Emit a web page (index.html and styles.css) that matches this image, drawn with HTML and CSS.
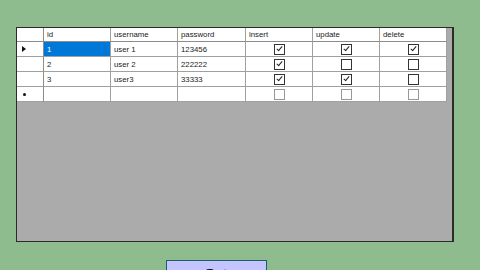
FILE: index.html
```html
<!DOCTYPE html>
<html lang="en">
<head>
    <meta charset="UTF-8">
    <title>Users</title>
    <link rel="stylesheet" href="styles.css">
</head>
<body>
    <div class="grid">
        <div class="row header">
            <div class="cell rowhead"></div>
            <div class="cell">id</div>
            <div class="cell">username</div>
            <div class="cell">password</div>
            <div class="cell">insert</div>
            <div class="cell">update</div>
            <div class="cell">delete</div>
        </div>
        <div class="row">
            <div class="cell rowhead"><span class="arrow"></span></div>
            <div class="cell selected">1</div>
            <div class="cell">user 1</div>
            <div class="cell">123456</div>
            <div class="cell center"><span class="box checked"></span></div>
            <div class="cell center"><span class="box checked"></span></div>
            <div class="cell center"><span class="box checked"></span></div>
        </div>
        <div class="row">
            <div class="cell rowhead"></div>
            <div class="cell">2</div>
            <div class="cell">user 2</div>
            <div class="cell">222222</div>
            <div class="cell center"><span class="box checked"></span></div>
            <div class="cell center"><span class="box"></span></div>
            <div class="cell center"><span class="box"></span></div>
        </div>
        <div class="row">
            <div class="cell rowhead"></div>
            <div class="cell">3</div>
            <div class="cell">user3</div>
            <div class="cell">33333</div>
            <div class="cell center"><span class="box checked"></span></div>
            <div class="cell center"><span class="box checked"></span></div>
            <div class="cell center"><span class="box"></span></div>
        </div>
        <div class="row">
            <div class="cell rowhead"><span class="dot"></span></div>
            <div class="cell"></div>
            <div class="cell"></div>
            <div class="cell"></div>
            <div class="cell center"><span class="box new"></span></div>
            <div class="cell center"><span class="box new"></span></div>
            <div class="cell center"><span class="box new"></span></div>
        </div>
    </div>
    <div class="actions">
        <button type="button">Test</button>
    </div>
</body>
</html>
```

FILE: styles.css
```css
body {
    margin: 0;
    background-color: #8fbc8f;
    font-family: 'Liberation Sans', Arial, sans-serif;
    font-size: 7.8px;
    color: #222;
    height: 270px;
    overflow: hidden;
}
.grid {
    margin: 27px 0 0 16px;
    width: 435px;
    height: 213px;
    background-color: #ababab;
    border: 1px solid #2b2b2b;
    border-right-width: 2px;
}
.row {
    display: grid;
    grid-template-columns: 27px 67px 67px 68px 67px 67px 67px;
    width: 430px;
    height: 15px;
    background-color: #fff;
}
.row.header {
    height: 14px;
}
.cell {
    display: flex;
    align-items: center;
    padding-left: 3px;
    border-right: 1px solid #a0a0a0;
    border-bottom: 1px solid #a0a0a0;
    white-space: nowrap;
    overflow: hidden;
}
.header .cell {
    border-bottom-color: #8c8c8c;
}
.rowhead {
    padding-left: 0;
    justify-content: center;
    border-right-color: #8c8c8c;
}
.cell.center {
    justify-content: center;
    padding-left: 0;
}
.cell.selected {
    background-color: #0078d7;
    color: #fff;
}
.arrow {
    width: 0;
    height: 0;
    border-top: 3px solid transparent;
    border-bottom: 3px solid transparent;
    border-left: 4px solid #111;
    margin-left: -12px;
}
.dot {
    width: 3px;
    height: 3px;
    background-color: #111;
    border-radius: 50%;
    margin-left: -11px;
}
.box {
    position: relative;
    width: 9px;
    height: 9px;
    border: 1px solid #333;
    background-color: #fff;
}
.box.checked::after {
    content: "";
    position: absolute;
    left: 3px;
    top: 0;
    width: 2px;
    height: 5px;
    border-right: 1px solid #222;
    border-bottom: 1px solid #222;
    transform: rotate(40deg);
}
.box.new {
    border-color: #999;
}
.actions {
    padding: 18px 0 0 166px;
}
button {
    width: 101px;
    height: 22px;
    background-color: #c4c4ff;
    border: 1px solid #1d5c6c;
    font-family: 'Liberation Sans', Arial, sans-serif;
    font-size: 11px;
    color: #000;
    padding: 4px 0 0 0;
}
```
